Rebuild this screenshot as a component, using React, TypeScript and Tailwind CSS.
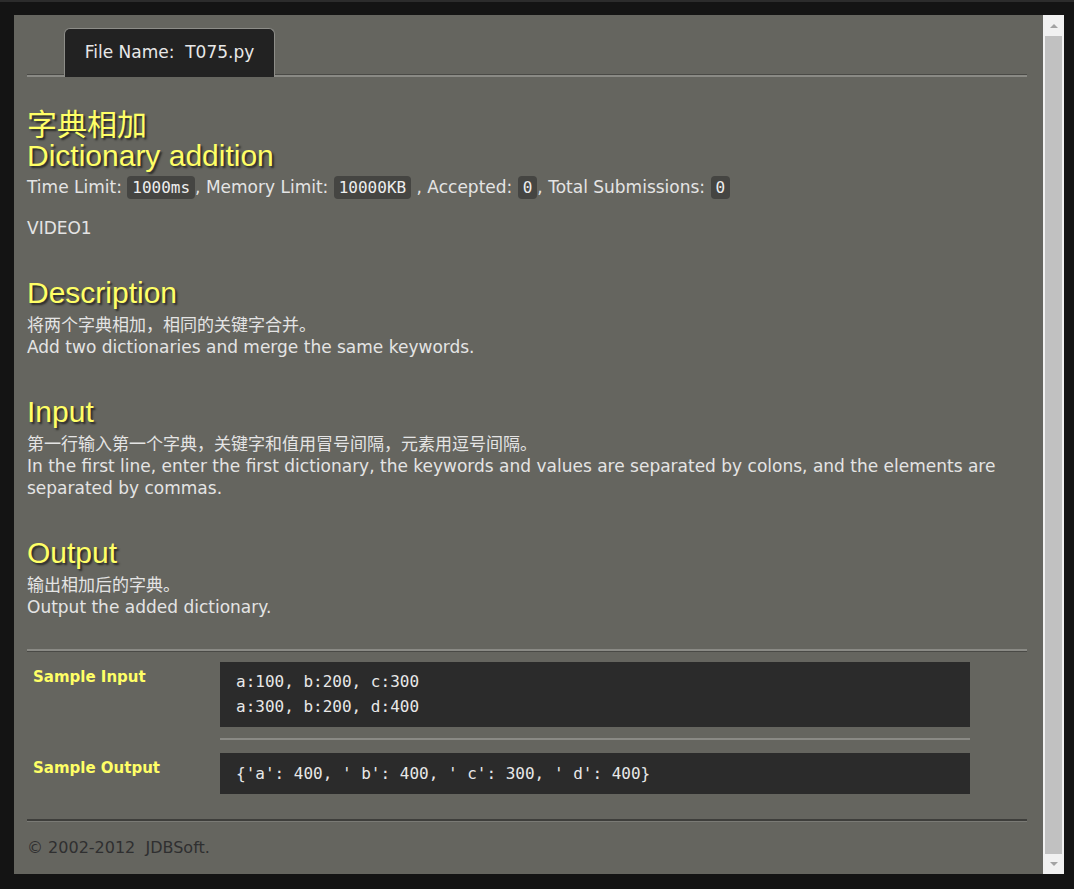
import type { ReactNode } from 'react'

const BODY = '"DejaVu Sans", "Noto Sans CJK SC", sans-serif'
const HEAD = '"Liberation Sans", Arial, "Noto Sans CJK SC", sans-serif'
const MONO = '"DejaVu Sans Mono", "Liberation Mono", monospace'

function Badge({ children }: { children: ReactNode }) {
  return (
    <code
      className="rounded-[4px] bg-[#454542] px-[5px] py-[2px] text-[16px] text-[#eeeeee]"
      style={{ fontFamily: MONO }}
    >
      {children}
    </code>
  )
}

function Heading({ children }: { children: ReactNode }) {
  return (
    <h2
      className="text-[30px] leading-[34px] text-[#ffff66] [text-shadow:2px_2px_2px_#2a2a28]"
      style={{ fontFamily: HEAD }}
    >
      {children}
    </h2>
  )
}

function Section({ title, lines }: { title: string; lines: string[] }) {
  return (
    <div className="mt-[37px]">
      <Heading>{title}</Heading>
      <div className="mt-[4px] text-[17px] leading-[22px] text-[#e4e4e4]">
        {lines.map(l => (
          <p key={l}>{l}</p>
        ))}
      </div>
    </div>
  )
}

export default function App() {
  return (
    <div className="flex h-[889px] w-[1074px] border-t-2 border-[#2c2c2c] bg-[#141414] pb-[15px] pl-[14px] pr-[10px] pt-[13px]">
      <div className="flex flex-1 bg-[#65655f]" style={{ fontFamily: BODY }}>
        {/* content */}
        <div className="flex-1 overflow-hidden pl-[13px] pr-[16px] pt-[13px]">
          <div className="flex border-b-2 border-[#8a8a85] pl-[37px] [box-shadow:0_-1px_0_#4a4a46_inset]">
            <div className="-mb-[2px] flex h-[49px] w-[211px] items-center justify-center rounded-t-[6px] border border-b-0 border-[#8d8d88] bg-[#222222] text-[17px] text-[#e8e8e8]">
              File Name:&nbsp;&nbsp;T075.py
            </div>
          </div>

          <h1
            className="mt-[32px] text-[30px] leading-[31px] text-[#ffff66] [text-shadow:2px_2px_2px_#2a2a28]"
            style={{ fontFamily: HEAD }}
          >
            字典相加
            <br />
            Dictionary addition
          </h1>
          <div className="mt-[4px] text-[17px] leading-[24px] text-[#e4e4e4]">
            Time Limit: <Badge>1000ms</Badge>, Memory Limit: <Badge>10000KB</Badge> , Accepted: <Badge>0</Badge>, Total
            Submissions: <Badge>0</Badge>
          </div>
          <p className="mt-[17px] text-[17px] leading-[22px] text-[#e4e4e4]">VIDEO1</p>

          <Section title="Description" lines={['将两个字典相加，相同的关键字合并。', 'Add two dictionaries and merge the same keywords.']} />
          <Section
            title="Input"
            lines={[
              '第一行输入第一个字典，关键字和值用冒号间隔，元素用逗号间隔。',
              'In the first line, enter the first dictionary, the keywords and values are separated by colons, and the elements are separated by commas.',
            ]}
          />
          <Section title="Output" lines={['输出相加后的字典。', 'Output the added dictionary.']} />

          {/* samples */}
          <div className="mt-[31px] border-t-2 border-[#8a8a85] [box-shadow:0_1px_0_#4a4a46_inset] pt-[11px]">
            <div className="flex">
              <div className="w-[193px] pl-[6px] pt-[3px] text-[15px] font-bold leading-[24px] text-[#ffff66]">Sample Input</div>
              <pre
                className="h-[65px] w-[750px] bg-[#2b2b2b] px-[16px] pt-[7px] text-[16px] leading-[25px] text-[#e8e8e8]"
                style={{ fontFamily: MONO }}
              >
                {'a:100, b:200, c:300\na:300, b:200, d:400'}
              </pre>
            </div>
            <div className="ml-[193px] mt-[11px] w-[750px] border-t-2 border-[#8a8a85] [box-shadow:0_1px_0_#4a4a46_inset]" />
            <div className="mt-[13px] flex">
              <div className="w-[193px] pl-[6px] pt-[3px] text-[15px] font-bold leading-[24px] text-[#ffff66]">Sample Output</div>
              <pre
                className="flex h-[41px] w-[750px] items-center bg-[#2b2b2b] px-[16px] text-[16px] text-[#e8e8e8]"
                style={{ fontFamily: MONO }}
              >
                {"{'a': 400, ' b': 400, ' c': 300, ' d': 400}"}
              </pre>
            </div>
          </div>

          <div className="mt-[25px] border-t-2 border-[#3e3e3b] [box-shadow:0_1px_0_#7a7a75_inset] pt-[15px] text-[16px] text-[#2f2f30]">
            ©&nbsp;2002-2012&nbsp;&nbsp;JDBSoft.
          </div>
        </div>

        {/* scrollbar */}
        <div className="flex w-[21px] flex-col items-center bg-[#f1f1f1]">
          <div className="flex h-[21px] items-center justify-center">
            <div className="h-0 w-0 border-x-[4px] border-b-[4px] border-x-transparent border-b-[#a3a3a3]" />
          </div>
          <div className="w-[17px] flex-1 bg-[#c1c1c1]" />
          <div className="flex h-[20px] items-center justify-center">
            <div className="h-0 w-0 border-x-[4px] border-t-[4px] border-x-transparent border-t-[#a3a3a3]" />
          </div>
        </div>
      </div>
    </div>
  )
}
